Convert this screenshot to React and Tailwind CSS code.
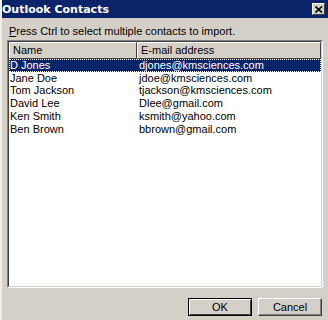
import React from "react";

const contacts = [
  ["D Jones", "djones@kmsciences.com"],
  ["Jane Doe", "jdoe@kmsciences.com"],
  ["Tom Jackson", "tjackson@kmsciences.com"],
  ["David Lee", "Dlee@gmail.com"],
  ["Ken Smith", "ksmith@yahoo.com"],
  ["Ben Brown", "bbrown@gmail.com"],
];

function Btn({ children, def }) {
  return (
    <div
      className={
        "w-[64px] h-[18px] flex items-center justify-center bg-[#d4d0c8] text-black text-[11px] " +
        (def
          ? "border border-black shadow-[inset_1px_1px_0_#fff,inset_-1px_-1px_0_#404040]"
          : "border-t border-l border-t-white border-l-white border-r border-b border-r-[#404040] border-b-[#404040] shadow-[inset_-1px_-1px_0_#808080]")
      }
    >
      {children}
    </div>
  );
}

export default function App() {
  return (
    <div
      className="w-[328px] h-[320px] bg-[#d4d0c8] flex flex-col border-l-2 border-l-[#f0eee8] overflow-hidden"
      style={{ fontFamily: "'Liberation Sans', Arial, sans-serif" }}
    >
      <div className="h-[18px] bg-[#0a246a] flex items-center justify-between pl-[2px] pr-[3px] -ml-[2px]">
        <span className="text-white font-bold text-[11px] leading-none" style={{ fontFamily: "'DejaVu Sans', sans-serif" }}>Outlook Contacts</span>
        <div className="w-[13px] h-[12px] bg-[#d4d0c8] border-t border-l border-white border-r border-b border-r-[#404040] border-b-[#404040] flex items-center justify-center">
          <svg width="8" height="7" viewBox="0 0 8 7">
            <path d="M0.5 0.5 L7 6.5 M7 0.5 L0.5 6.5" stroke="black" strokeWidth="1.6" />
          </svg>
        </div>
      </div>
      <div className="flex-1 flex flex-col pl-[5px] pr-[4px]">
        <div className="h-[22px] flex items-end pb-[3px] text-[11px] text-black leading-none pl-[2px]">
          <span>
            <span className="underline">P</span>ress Ctrl to select multiple contacts to import.
          </span>
        </div>
        <div className="h-[248px] bg-white border-t border-l border-t-[#808080] border-l-[#808080] border-r border-b border-r-white border-b-white mr-[1px]">
          <div className="h-full border-t border-l border-t-[#404040] border-l-[#404040] border-r border-b border-r-[#d4d0c8] border-b-[#d4d0c8] flex flex-col">
            <div className="flex h-[17px] text-[11px] text-black">
              <div className="w-[128px] bg-[#d4d0c8] border-t border-l border-white border-r border-b border-r-[#404040] border-b-[#404040] flex items-center pl-[3px]">
                Name
              </div>
              <div className="flex-1 bg-[#d4d0c8] border-t border-l border-white border-r border-b border-r-[#404040] border-b-[#404040] flex items-center pl-[3px]">
                E-mail address
              </div>
            </div>
            <div className="flex flex-col">
              {contacts.map(([n, e], i) => (
                <div
                  key={n}
                  className={
                    "flex h-[12.8px] items-center text-[11px] leading-none " +
                    (i === 0
                      ? "bg-[#0a246a] text-white outline-1 outline-dotted outline-[#ffffff] -outline-offset-1"
                      : "text-black")
                  }
                >
                  <div className="w-[128px] pl-[1px]">{n}</div>
                  <div className="flex-1 pl-[2px]">{e}</div>
                </div>
              ))}
            </div>
          </div>
        </div>
        <div className="flex justify-end gap-[6px] pt-[10px] pr-[2px]">
          <Btn def>OK</Btn>
          <Btn>Cancel</Btn>
        </div>
      </div>
    </div>
  );
}
